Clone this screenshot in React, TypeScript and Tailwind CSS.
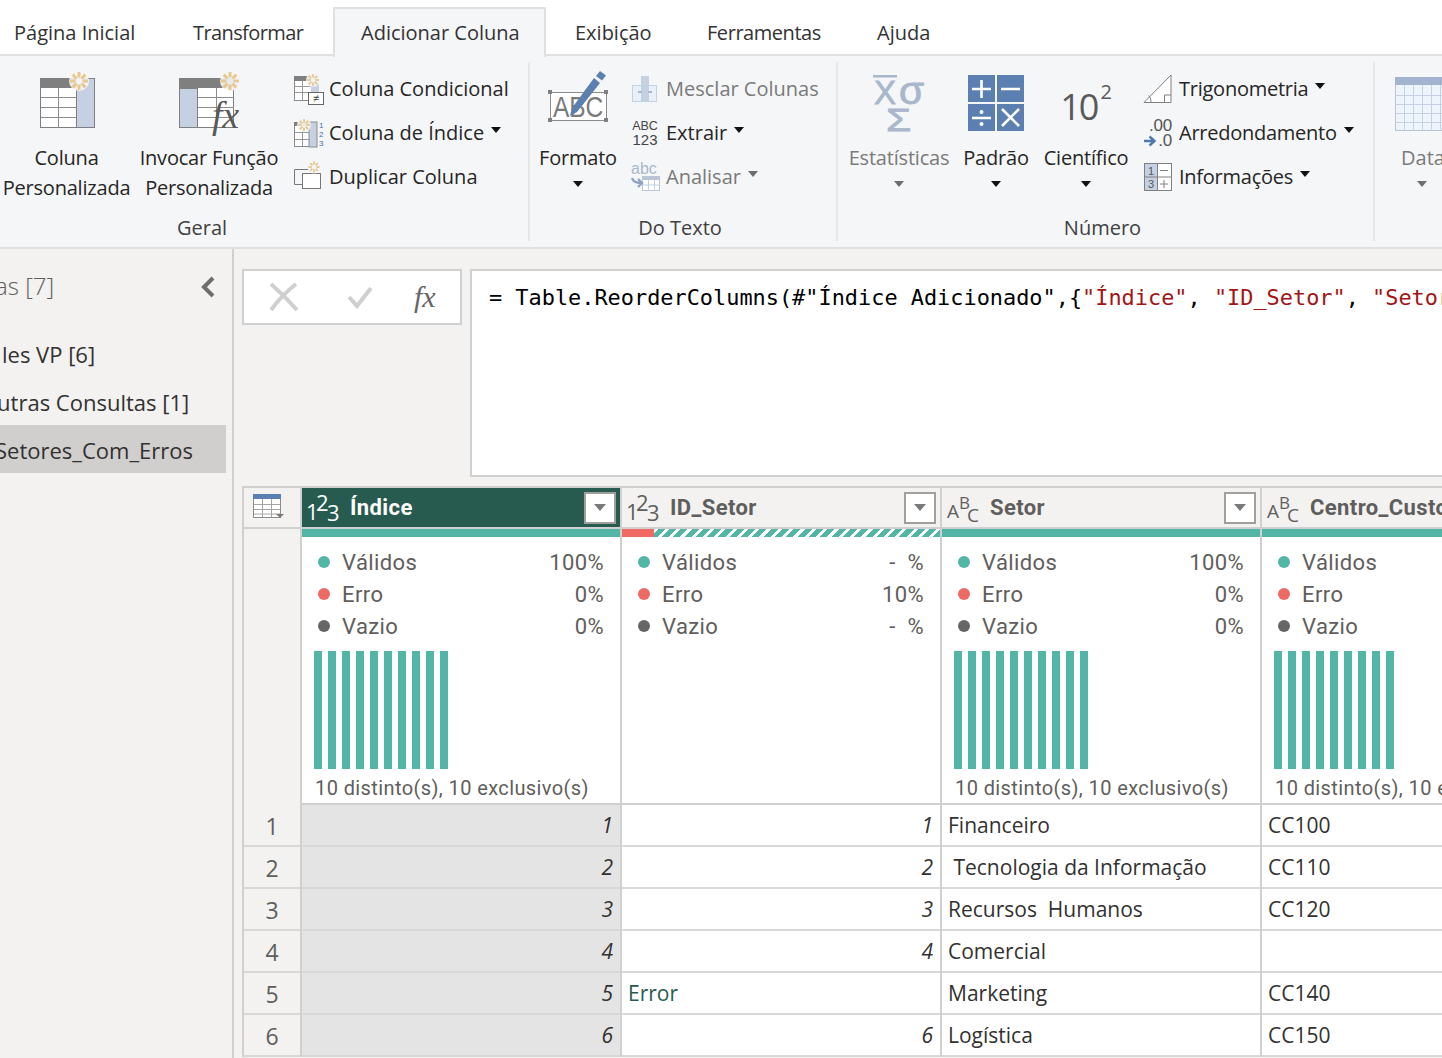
import React from 'react';

const TEAL = '#52b5a6';

const Caret = ({ color = '#111', className = '' }: { color?: string; className?: string }) => (
  <svg width="10" height="6" viewBox="0 0 10 6" className={className}>
    <path d="M0 0h10L5 6z" fill={color} />
  </svg>
);

const Star = ({ x, y, r }: { x: number; y: number; r: number }) => {
  const rays = [0, 45, 90, 135, 180, 225, 270, 315];
  return (
    <g>
      <circle cx={x} cy={y} r={r + 1} fill="#f5f6f7" opacity="0.9" />
      {rays.map((a) => {
        const c = Math.cos((a * Math.PI) / 180);
        const s = Math.sin((a * Math.PI) / 180);
        return (
          <line key={a} x1={x + c * r * 0.4} y1={y + s * r * 0.4} x2={x + c * r} y2={y + s * r} stroke="#e8c88e" strokeWidth={r > 6 ? 3 : 1.8} />
        );
      })}
    </g>
  );
};

const CustomColumnIcon = () => (
  <svg width="62" height="60" viewBox="0 0 62 60">
    <rect x="4.500" y="6.500" width="54" height="49" fill="#fff" stroke="#7f7f7f" />
    <rect x="4" y="6" width="55" height="10" fill="#7f7f7f" />
    <rect x="40.500" y="6.500" width="18" height="49" fill="#c5d1e3" stroke="#7f7f7f" />
    <path d="M5 25.500h35M5 35.500h35M5 45.500h35M22.500 16v40" stroke="#8c8c8c" fill="none" />
    <Star x={43} y={9} r={9} />
  </svg>
);

const InvokeIcon = () => (
  <svg width="78" height="66" viewBox="0 0 78 66">
    <rect x="9.500" y="6.500" width="54" height="49" fill="#fff" stroke="#7f7f7f" />
    <rect x="9" y="6" width="55" height="10" fill="#7f7f7f" />
    <rect x="9.500" y="16.500" width="18" height="39" fill="#c5d1e3" stroke="#7f7f7f" />
    <path d="M28 25.500h36M28 35.500h36M28 45.500h36M46.500 16v40" stroke="#8c8c8c" fill="none" />
    <Star x={60} y={9} r={9} />
    <text x="42" y="56" fontFamily="'Liberation Serif',serif" fontStyle="italic" fontSize="38" fill="#595959">fx</text>
  </svg>
);

const ConditionalIcon = () => (
  <svg width="32" height="32" viewBox="0 0 32 32">
    <rect x="1.500" y="3.500" width="24" height="24" fill="#fff" stroke="#8c8c8c" />
    <rect x="1" y="3" width="25" height="5" fill="#7f7f7f" />
    <rect x="18" y="3" width="8" height="20" fill="#c5d1e3" />
    <path d="M2 13.500h16M2 19.500h16M9.500 8v19" stroke="#999" />
    <Star x={20} y={7} r={6} />
    <rect x="15.500" y="19.500" width="15" height="12" fill="#fff" stroke="#666" />
    <text x="23" y="29" textAnchor="middle" fontSize="11" fontFamily="'Liberation Sans',sans-serif" fill="#444">≠</text>
  </svg>
);

const IndexIcon = () => (
  <svg width="32" height="32" viewBox="0 0 32 32">
    <rect x="1.500" y="5.500" width="22" height="24" fill="#fff" stroke="#8c8c8c" />
    <rect x="1" y="5" width="23" height="4" fill="#7f7f7f" />
    <rect x="16" y="5" width="8" height="25" fill="#c5d1e3" stroke="#8c8c8c" />
    <path d="M2 15.500h14M2 22.500h14M9.500 9v20" stroke="#999" />
    <Star x={11} y={8} r={6} />
    <text x="26" y="11" fontSize="8" fontFamily="'Liberation Sans',sans-serif" fill="#4a6fa5">1</text>
    <text x="26" y="20" fontSize="8" fontFamily="'Liberation Sans',sans-serif" fill="#4a6fa5">2</text>
    <text x="26" y="29" fontSize="8" fontFamily="'Liberation Sans',sans-serif" fill="#4a6fa5">3</text>
  </svg>
);

const DuplicateIcon = () => (
  <svg width="32" height="32" viewBox="0 0 32 32">
    <path d="M9.500 23.500h-8v-15h14" fill="none" stroke="#777" />
    <rect x="9.500" y="12.500" width="18" height="15" fill="#fff" stroke="#777" />
    <Star x={21} y={6} r={5.500} />
  </svg>
);

const FormatIcon = () => (
  <svg width="62" height="54" viewBox="0 0 62 54">
    <rect x="3.500" y="22.500" width="56" height="28" fill="#fff" stroke="#8c8c8c" />
    {[[3, 22], [59, 22], [3, 50], [59, 50]].map(([x, y]) => (
      <rect key={`${x}-${y}`} x={x - 2} y={y - 2} width="4" height="4" fill="#808080" />
    ))}
    <text x="31" y="47" textAnchor="middle" fontSize="30" fontFamily="'Liberation Sans',sans-serif" fill="#7a7a7a" textLength="50" lengthAdjust="spacingAndGlyphs">ABC</text>
    <path d="M23 46l2-8 22-30 6 5-23 29z" fill="#5b7fb0" />
    <path d="M49 6l4-5 6 4.500-4 5z" fill="#5b7fb0" />
  </svg>
);

const MergeIcon = () => (
  <svg width="28" height="28" viewBox="0 0 28 28">
    <rect x="1.500" y="10.500" width="24" height="16" fill="#eaf0f7" stroke="#c5d1e3" />
    <rect x="10" y="1" width="8" height="26" fill="#c5d1e3" />
    <path d="M7 17h4M21 17h-4" stroke="#a9b6cc" strokeWidth="2" />
  </svg>
);

const ExtractIcon = () => (
  <svg width="28" height="28" viewBox="0 0 28 28">
    <text x="14" y="11" textAnchor="middle" fontSize="12.500" fontFamily="'Liberation Sans',sans-serif" fill="#444">ABC</text>
    <text x="14" y="26" textAnchor="middle" fontSize="15" fontFamily="'Liberation Sans',sans-serif" fill="#444">123</text>
  </svg>
);

const ParseIcon = () => (
  <svg width="30" height="30" viewBox="0 0 30 30">
    <text x="0" y="12" fontSize="16" fontFamily="'Liberation Sans',sans-serif" fill="#a9b6cc">abc</text>
    <rect x="11.500" y="14.500" width="17" height="14" fill="#fff" stroke="#b9c4d6" />
    <rect x="11" y="14" width="18" height="4" fill="#b9c4d6" />
    <path d="M12 23h17M17.500 18v11M23.500 18v11" stroke="#c5d1e3" />
    <path d="M1 16c1 4 4 5 9 5m-3-4l4 4-4 4" stroke="#8ea3c2" strokeWidth="2.400" fill="none" />
  </svg>
);

const StatsIcon = () => (
  <svg width="56" height="58" viewBox="0 0 56 58">
    <rect x="2" y="0" width="24" height="2.500" fill="#a9b6cc" />
    <g fontFamily="'Liberation Sans',sans-serif" fill="#a9b6cc" stroke="#a9b6cc" strokeWidth="0.800">
      <text x="3" y="29" fontSize="33">X</text>
      <text x="28" y="29" fontSize="38" textLength="25" lengthAdjust="spacingAndGlyphs">σ</text>
      <text x="15" y="56" fontSize="32" textLength="25" lengthAdjust="spacingAndGlyphs">Σ</text>
    </g>
  </svg>
);

const StandardIcon = () => (
  <svg width="56" height="56" viewBox="0 0 56 56">
    <rect x="0" y="0" width="27" height="27" fill="#5a7fb0" />
    <rect x="29" y="0" width="27" height="27" fill="#5a7fb0" />
    <rect x="0" y="29" width="27" height="27" fill="#5a7fb0" />
    <rect x="29" y="29" width="27" height="27" fill="#5a7fb0" />
    <path d="M4 14h19M13.500 5v18M33 14h19M4 43h19M34 34l17 17M51 34L34 51" stroke="#fff" strokeWidth="2.600" />
    <circle cx="13.500" cy="37" r="2" fill="#fff" />
    <circle cx="13.500" cy="49" r="2" fill="#fff" />
  </svg>
);

const TrigIcon = () => (
  <svg width="30" height="30" viewBox="0 0 30 30">
    <path d="M1 28.500h27V1z" fill="#fff" stroke="#808080" />
    <path d="M21.500 28v-7h6.500M8 28c0-3-1-5-2.500-6.500" fill="none" stroke="#808080" />
  </svg>
);

const RoundIcon = () => (
  <svg width="30" height="30" viewBox="0 0 30 30">
    <text x="29" y="13" textAnchor="end" fontSize="17" fontFamily="'Liberation Sans',sans-serif" fill="#555">.00</text>
    <text x="29" y="28" textAnchor="end" fontSize="17" fontFamily="'Liberation Sans',sans-serif" fill="#555">.0</text>
    <path d="M1 23h9M6.500 18.500l5 4.500-5 4.500" fill="none" stroke="#4f78ad" strokeWidth="2.400" />
  </svg>
);

const InfoIcon = () => (
  <svg width="30" height="30" viewBox="0 0 30 30">
    <rect x="1.500" y="1.500" width="27" height="27" fill="#fff" stroke="#808080" />
    <rect x="2" y="2" width="12" height="26" fill="#c5d1e3" />
    <path d="M2 15h26M14.500 2v26" stroke="#808080" />
    <text x="8" y="13" textAnchor="middle" fontSize="11" fontFamily="'Liberation Sans',sans-serif" fill="#555">1</text>
    <text x="8" y="26" textAnchor="middle" fontSize="11" fontFamily="'Liberation Sans',sans-serif" fill="#555">3</text>
    <path d="M17 8.500h8M17 22h8M21 18v8" stroke="#808080" />
  </svg>
);

const CalendarIcon = () => (
  <svg width="60" height="56" viewBox="0 0 60 56">
    <rect x="0.500" y="1.500" width="59" height="53" fill="#eef4fb" stroke="#b9c4d6" />
    <rect x="0" y="1" width="60" height="8" fill="#a4b4cf" />
    <path d="M0 19.500h60M0 28.500h60M0 37.500h60M0 46.500h60M9.500 9v46M18.500 9v46M27.500 9v46M36.500 9v46M45.500 9v46" stroke="#c5d1e3" />
  </svg>
);

const BigButton = ({ label, width, top, icon, dim, caret }: { label: string[]; width: string; top: string; icon: React.ReactNode; dim?: boolean; caret?: boolean }) => (
  <div className={`${width} flex flex-col items-center shrink-0 tracking-[-0.2px] ${dim ? 'text-[#7a7a7a]' : 'text-[#262626]'}`}>
    <div className={`h-[81px] ${top}`}>{icon}</div>
    {label.map((l) => (
      <div key={l} className="leading-[30px] whitespace-nowrap">{l}</div>
    ))}
    {caret && (
      <div className="h-[22px] flex items-center">
        <Caret color={dim ? '#6e6e6e' : '#111'} />
      </div>
    )}
  </div>
);

const SmallRow = ({ icon, label, dim, caret, iconWidth }: { icon: React.ReactNode; label: string; dim?: boolean; caret?: boolean; iconWidth: string }) => (
  <div className={`h-11 flex items-center whitespace-nowrap ${dim ? 'text-[#7a7a7a]' : 'text-[#262626]'}`}>
    <div className={`${iconWidth} shrink-0`}>{icon}</div>
    <span>{label}</span>
    {caret && <Caret color={dim ? '#6e6e6e' : '#111'} className="ml-[7px] mb-[6px]" />}
  </div>
);

const Ribbon = () => (
  <div className="h-[193px] shrink-0 bg-[#f5f6f7] border-b-2 border-[#e0e0e0] pt-[6px] flex overflow-hidden">
    <div className="w-[530px] shrink-0 h-[179px] border-r-2 border-[#e6e7e8] flex flex-col">
      <div className="h-[153px] flex">
        <BigButton width="w-[133px]" top="pt-[10px]" icon={<CustomColumnIcon />} label={['Coluna', 'Personalizada']} />
        <BigButton width="w-[140px] ml-[6px]" top="pt-[10px]" icon={<InvokeIcon />} label={['Invocar Função', 'Personalizada']} />
        <div className="ml-[14px] pt-[5px]">
          <SmallRow iconWidth="w-9" icon={<ConditionalIcon />} label="Coluna Condicional" />
          <SmallRow iconWidth="w-9" icon={<IndexIcon />} label="Coluna de Índice" caret />
          <SmallRow iconWidth="w-9" icon={<DuplicateIcon />} label="Duplicar Coluna" />
        </div>
      </div>
      <div className="pl-[177px] leading-[26px] text-[#404040]">Geral</div>
    </div>
    <div className="w-[308px] shrink-0 h-[179px] border-r-2 border-[#e6e7e8] flex flex-col">
      <div className="h-[153px] flex">
        <BigButton width="w-[96px]" top="pt-[8px]" icon={<FormatIcon />} label={['Formato']} caret />
        <div className="ml-[5px] pt-[5px]">
          <SmallRow iconWidth="w-[35px]" icon={<MergeIcon />} label="Mesclar Colunas" dim />
          <SmallRow iconWidth="w-[35px]" icon={<ExtractIcon />} label="Extrair" caret />
          <SmallRow iconWidth="w-[35px]" icon={<ParseIcon />} label="Analisar" dim caret />
        </div>
      </div>
      <div className="pr-[6px] text-center leading-[26px] text-[#404040]">Do Texto</div>
    </div>
    <div className="w-[537px] shrink-0 h-[179px] border-r-2 border-[#e6e7e8] flex flex-col">
      <div className="h-[153px] flex">
        <BigButton width="w-[122px]" top="pt-[13px]" icon={<StatsIcon />} label={['Estatísticas']} dim caret />
        <BigButton width="w-[72px]" top="pt-[13px]" icon={<StandardIcon />} label={['Padrão']} caret />
        <BigButton
          width="w-[108px]"
          top="pt-[27px]"
          icon={
            <div className="flex items-start text-[#595959] leading-none">
              <span className="text-[36px] tracking-[-2px]">10</span>
              <span className="text-[20px] ml-[3px] -mt-[7px]">2</span>
            </div>
          }
          label={['Científico']}
          caret
        />
        <div className="ml-[3px] pt-[5px] tracking-[-0.25px]">
          <SmallRow iconWidth="w-9" icon={<TrigIcon />} label="Trigonometria" caret />
          <SmallRow iconWidth="w-9" icon={<RoundIcon />} label="Arredondamento" caret />
          <SmallRow iconWidth="w-9" icon={<InfoIcon />} label="Informações" caret />
        </div>
      </div>
      <div className="pr-[6px] text-center leading-[26px] text-[#404040]">Número</div>
    </div>
    <div className="shrink-0 pl-[20px]">
      <div className="h-[81px] pt-[14px]">
        <CalendarIcon />
      </div>
      <div className="pl-[6px] leading-[30px] text-[#7a7a7a]">Data</div>
      <div className="h-[22px] flex items-center pl-[22px]">
        <Caret color="#6e6e6e" />
      </div>
    </div>
  </div>
);

const Tabs = () => (
  <div className="h-[56px] shrink-0 bg-white border-b-2 border-[#e0e0e0] flex text-[#333] whitespace-nowrap">
    <div className="w-[166px] pl-[14px] pt-[20px] leading-[26px]">Página Inicial</div>
    <div className="w-[167px] pl-[27px] pt-[20px] leading-[26px] tracking-[-0.6px]">Transformar</div>
    <div className="w-[213px] h-[50px] mt-[7px] pl-[26px] pt-[11px] leading-[26px] bg-[#f5f6f7] border-2 border-b-0 border-[#e0e0e0] relative z-10">Adicionar Coluna</div>
    <div className="w-[132px] pl-[29px] pt-[20px] leading-[26px]">Exibição</div>
    <div className="w-[170px] pl-[29px] pt-[20px] leading-[26px] tracking-[-0.45px]">Ferramentas</div>
    <div className="pl-[29px] pt-[20px] leading-[26px]">Ajuda</div>
  </div>
);

const Sidebar = () => (
  <div className="w-[234px] shrink-0 border-r-2 border-[#d2d0ce] overflow-hidden text-[#323130] text-[22px]">
    <div className="h-[82px] pt-[21px] flex justify-between items-start pr-[16px]">
      <span className="text-[#605e5c] leading-[32px] text-[24px] -ml-[5px] font-light">as [7]</span>
      <svg width="16" height="24" viewBox="0 0 16 24" className="mt-[5px]">
        <path d="M13 3L4 12l9 9" fill="none" stroke="#6e6e6e" strokeWidth="4" />
      </svg>
    </div>
    <div className="h-12 leading-[46px] pl-[2px] whitespace-nowrap">les VP [6]</div>
    <div className="h-12 leading-[46px] -ml-[20px] whitespace-nowrap">Outras Consultas [1]</div>
    <div className="h-12 leading-[50px] -mt-[2px] w-[226px] bg-[#d0cfce] overflow-hidden whitespace-nowrap">
      <div className="-ml-[5px]">Setores_Com_Erros</div>
    </div>
  </div>
);

const FormulaBar = () => (
  <div className="h-[208px] shrink-0 flex gap-2">
    <div className="w-[220px] h-[56px] shrink-0 bg-white border-2 border-[#d0d0d0] flex items-center">
      <svg width="32" height="32" viewBox="0 0 32 32" className="ml-[24px]">
        <path d="M3 3c8 7 18 17 26 26M28 3C19 10 11 18 3 29" fill="none" stroke="#cfcfcf" strokeWidth="4" />
      </svg>
      <svg width="28" height="28" viewBox="0 0 28 28" className="ml-[46px]">
        <path d="M3 14l8 9L25 5" fill="none" stroke="#cfcfcf" strokeWidth="4" />
      </svg>
      <span className="ml-[40px] font-['Liberation_Serif',serif] italic text-[30px] leading-none text-[#666]">fx</span>
    </div>
    <div className="w-[1000px] shrink-0 bg-white border-2 border-[#d0d0d0] pl-[17px] pt-[13px] font-['DejaVu_Sans_Mono',monospace] text-[21.9px] leading-[28px] whitespace-pre overflow-hidden text-black">
      {'= Table.ReorderColumns(#"Índice Adicionado",{'}
      <span className="text-[#a31515]">"Índice"</span>
      {', '}
      <span className="text-[#a31515]">"ID_Setor"</span>
      {', '}
      <span className="text-[#a31515]">"Setor"</span>
    </div>
  </div>
);

const TypeIcon = ({ kind, color }: { kind: 'num' | 'abc'; color: string }) => (
  <svg width="34" height="30" viewBox="0 0 34 30" className="shrink-0">
    {kind === 'num' ? (
      <g fontFamily="'Open Sans',sans-serif" fill={color}>
        <text x="0" y="27" fontSize="22">1</text>
        <text x="10" y="18" fontSize="22">2</text>
        <text x="21" y="28" fontSize="22">3</text>
      </g>
    ) : (
      <g fontFamily="'Open Sans',sans-serif" fill={color}>
        <text x="1" y="25" fontSize="19">A</text>
        <text x="13" y="16" fontSize="17">B</text>
        <text x="21" y="29" fontSize="19">C</text>
      </g>
    )}
  </svg>
);

const FilterButton = () => (
  <div className="w-[32px] h-[32px] shrink-0 bg-white border-2 border-[#a19f9d] flex items-center justify-center">
    <svg width="12" height="7" viewBox="0 0 12 7">
      <path d="M0 0h12L6 7z" fill="#7a7a7a" />
    </svg>
  </div>
);

const StatRow = ({ color, label, value }: { color: string; label: string; value: string }) => (
  <div className="h-8 flex items-center">
    <span className="w-3 h-3 rounded-full shrink-0" style={{ backgroundColor: color }} />
    <span className="ml-[12px] flex-1">{label}</span>
    <span className="whitespace-pre">{value}</span>
  </div>
);

type Col = {
  name: string;
  kind: 'num' | 'abc';
  stats: string[];
  bars: number;
  active?: boolean;
  error?: boolean;
  cells: React.ReactNode[];
};

const ColumnView = ({ col }: { col: Col }) => (
  <div className="w-[320px] shrink-0 flex flex-col border-r-2 border-[#d0d0d0]">
    <div className={`h-[39px] flex items-center pl-[4px] pr-[4px] ${col.active ? 'bg-[#275b4f] text-white' : 'bg-[#f3f2f1] text-[#605e5c]'}`}>
      <TypeIcon kind={col.kind} color={col.active ? '#fff' : '#605e5c'} />
      <span className="ml-[10px] flex-1 whitespace-nowrap font-['Roboto',sans-serif] font-bold text-[22px] tracking-[0.4px]">{col.name}</span>
      <FilterButton />
    </div>
    <div className="h-[2px] bg-[#d0d0d0]" />
    {col.error ? (
      <div className="h-2 flex">
        <div className="w-[32px] bg-[#ef6a63]" />
        <div className="flex-1 bg-[repeating-linear-gradient(-45deg,#52b5a6_0px,#52b5a6_5px,#ffffff_5px,#ffffff_8px)]" />
      </div>
    ) : (
      <div className="h-2 bg-[#52b5a6]" />
    )}
    <div className="h-[266px] bg-white pt-[9px] pl-[16px] pr-[16px] font-['Roboto',sans-serif] text-[22px] text-[#605e5c] tracking-[0.4px] whitespace-nowrap">
      <StatRow color={TEAL} label="Válidos" value={col.stats[0]} />
      <StatRow color="#ef6a63" label="Erro" value={col.stats[1]} />
      <StatRow color="#666666" label="Vazio" value={col.stats[2]} />
      {col.bars > 0 && (
        <>
          <div className="flex gap-[6px] mt-[9px] -ml-[4px] h-[118px]">
            {Array.from({ length: col.bars }).map((_, i) => (
              <div key={i} className="w-2 bg-[#52b5a6]" />
            ))}
          </div>
          <div className="mt-[6px] -ml-[3px] text-[20px] leading-[26px]">10 distinto(s), 10 exclusivo(s)</div>
        </>
      )}
    </div>
    <div className="h-[2px] bg-[#d0d0d0]" />
    {col.cells.map((c, i) => (
      <div key={i} className={`h-[42px] shrink-0 border-b-2 border-[#d8d8d8] flex items-center whitespace-pre px-[6px] text-[21px] pt-[2px] ${col.active ? 'bg-[#e4e4e4]' : 'bg-white'} text-[#323130]`}>
        {c}
      </div>
    ))}
  </div>
);

const Num = ({ v }: { v: number }) => <div className="w-full text-right italic pr-[1px]">{v}</div>;

const columns: Col[] = [
  { name: 'Índice', kind: 'num', active: true, bars: 10, stats: ['100%', '0%', '0%'], cells: [1, 2, 3, 4, 5, 6].map((v) => <Num v={v} />) },
  {
    name: 'ID_Setor',
    kind: 'num',
    bars: 0,
    error: true,
    stats: ['-  %', '10%', '-  %'],
    cells: [
      <Num v={1} />,
      <Num v={2} />,
      <Num v={3} />,
      <Num v={4} />,
      <span className="text-[#275b4f]">Error</span>,
      <Num v={6} />,
    ],
  },
  { name: 'Setor', kind: 'abc', bars: 10, stats: ['100%', '0%', '0%'], cells: ['Financeiro', ' Tecnologia da Informação', 'Recursos  Humanos', 'Comercial', 'Marketing', 'Logística'] },
  { name: 'Centro_Custo', kind: 'abc', bars: 9, stats: ['100%', '0%', '0%'], cells: ['CC100', 'CC110', 'CC120', '', 'CC140', 'CC150'] },
];

const RowNumbers = () => (
  <div className="w-[60px] shrink-0 flex flex-col border-x-2 border-[#d0d0d0] bg-[#f3f2f1]">
    <div className="h-[39px] flex items-start pl-[9px] pt-[5px]">
      <svg width="32" height="26" viewBox="0 0 32 26">
        <rect x="0.500" y="1.500" width="27" height="23" fill="#fff" stroke="#8c8c8c" />
        <rect x="0" y="1" width="28" height="5" fill="#5a7fb0" />
        <path d="M1 11.500h26M1 16.500h26M1 21h26M9.500 6v18M18.500 6v18" stroke="#a6a6a6" />
        <path d="M23 21h8l-4 4z" fill="#7a7a7a" />
      </svg>
    </div>
    <div className="h-[2px] bg-[#d0d0d0]" />
    <div className="h-[276px]" />
    {[1, 2, 3, 4, 5, 6].map((n) => (
      <div key={n} className="h-[42px] shrink-0 border-b-2 border-[#d8d8d8] flex items-center justify-center pt-[2px] text-[#605e5c] text-[23px]">
        {n}
      </div>
    ))}
  </div>
);

const App: React.FC = () => (
  <div className="w-[1442px] h-[1058px] overflow-hidden flex flex-col bg-[#f3f2f1] font-['Open_Sans',sans-serif] text-[20px]">
    <Tabs />
    <Ribbon />
    <div className="flex-1 flex min-h-0">
      <Sidebar />
      <div className="flex-1 min-w-0 pl-2 pt-5 flex flex-col overflow-hidden">
        <FormulaBar />
        <div className="mt-[9px] border-t-2 border-[#d0d0d0] flex w-max">
          <RowNumbers />
          {columns.map((c) => (
            <ColumnView key={c.name} col={c} />
          ))}
        </div>
      </div>
    </div>
  </div>
);

export default App;
